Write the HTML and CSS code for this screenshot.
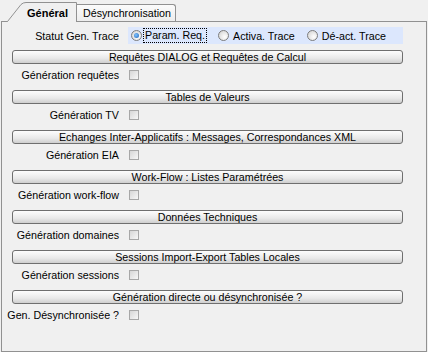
FILE: index.html
```html
<!DOCTYPE html>
<html lang="fr">
<head>
  <meta charset="UTF-8" />
  <title>Général</title>
  <link rel="stylesheet" href="styles.css">
</head>
<body>
<div class="window">
  <!-- Tabs -->
  <div class="tabs">
    <div class="tab tab-active">
      <svg class="tab-shape" width="70" height="21" viewBox="0 0 70 21">
        <path d="M0 21 L0.5 20.5 L14 3.5 Q16 1.5 19 1.5 L69.5 1.5 L69.5 21" fill="#f0f0f0" stroke="#919191" stroke-width="1"/>
      </svg>
      <span class="tab-text">Général</span>
    </div>
    <div class="tab tab-other">Désynchronisation</div>
  </div>
  <!-- Panel -->
  <div class="panel">
    <div class="row row-status">
      <span class="label">Statut Gen. Trace</span>
      <div class="radio-group">
        <label class="radio radio-checked"><span class="circle"></span><span class="focus">Param. Req.</span></label>
        <label class="radio"><span class="circle"></span><span>Activa. Trace</span></label>
        <label class="radio"><span class="circle"></span><span>Dé-act. Trace</span></label>
      </div>
    </div>

    <div class="section">
      <div class="bar">Requêtes DIALOG et Requêtes de Calcul</div>
      <div class="row"><span class="label">Génération requêtes</span><span class="check"></span></div>
    </div>
    <div class="section">
      <div class="bar">Tables de Valeurs</div>
      <div class="row"><span class="label">Génération TV</span><span class="check"></span></div>
    </div>
    <div class="section">
      <div class="bar">Echanges Inter-Applicatifs : Messages, Correspondances XML</div>
      <div class="row"><span class="label">Génération EIA</span><span class="check"></span></div>
    </div>
    <div class="section">
      <div class="bar">Work-Flow : Listes Paramétrées</div>
      <div class="row"><span class="label">Génération work-flow</span><span class="check"></span></div>
    </div>
    <div class="section">
      <div class="bar">Données Techniques</div>
      <div class="row"><span class="label">Génération domaines</span><span class="check"></span></div>
    </div>
    <div class="section">
      <div class="bar">Sessions Import-Export Tables Locales</div>
      <div class="row"><span class="label">Génération sessions</span><span class="check"></span></div>
    </div>
    <div class="section">
      <div class="bar">Génération directe ou désynchronisée ?</div>
      <div class="row"><span class="label">Gen. Désynchronisée ?</span><span class="check"></span></div>
    </div>
  </div>
</div>
</body>
</html>
```

FILE: styles.css
```css
body {
  margin: 0;
  background: #f0f0f0;
  font-family: 'Liberation Sans', Arial, sans-serif;
  font-size: 10.7px;
  color: #000;
}
.window {
  width: 428px;
  height: 352px;
  overflow: hidden;
}
.tabs {
  display: flex;
  align-items: flex-end;
  height: 21px;
  padding-left: 7px;
}
.tab {
  box-sizing: border-box;
  line-height: 14px;
}
.tab-active {
  position: relative;
  width: 70px;
  height: 21px;
  margin-bottom: -1px;
  z-index: 2;
}
.tab-shape {
  position: absolute;
  left: 0;
  top: 0;
}
.tab-text {
  position: relative;
  display: block;
  padding: 5px 0 0 20px;
  font-weight: bold;
  font-size: 11px;
}
.tab-other {
  width: 100px;
  height: 17px;
  padding: 1px 0 0 6px;
  margin-left: -1px;
  border: 1px solid #919191;
  border-bottom: none;
  border-radius: 0 3px 0 0;
  background: linear-gradient(#fbfbfb, #ededed);
}
.panel {
  box-sizing: border-box;
  position: relative;
  z-index: 1;
  width: 426px;
  height: 331px;
  margin-left: 1px;
  padding-top: 5px;
  border: 1px solid #919191;
  background: #f0f0f0;
}
.row {
  display: flex;
  align-items: center;
  height: 22px;
}
.label {
  width: 117px;
  text-align: right;
  white-space: nowrap;
}
.row-status {
  height: 17px;
}
.radio-group {
  display: flex;
  align-items: center;
  gap: 12px;
  height: 17px;
  width: 275px;
  margin-left: 9px;
  padding-left: 3px;
  box-sizing: border-box;
  background: #dce7fd;
}
.radio {
  display: flex;
  align-items: center;
  gap: 4px;
}
.circle {
  position: relative;
  width: 11px;
  height: 11px;
  box-sizing: border-box;
  border: 1px solid #7d7d7d;
  border-radius: 50%;
  background: radial-gradient(circle at 65% 65%, #ffffff, #cfcfcf);
}
.radio-checked .circle::after {
  content: '';
  position: absolute;
  left: 2px;
  top: 2px;
  width: 5px;
  height: 5px;
  border-radius: 50%;
  background: radial-gradient(circle at 40% 40%, #7fc3ff, #1f62b8);
}
.focus {
  outline: 1px dotted #000;
  padding: 0 1px;
  margin-left: -2px;
  line-height: 13px;
}
.section {
  margin-top: 4px;
}
.row-status + .section {
  margin-top: 6px;
}
.bar {
  box-sizing: border-box;
  width: 391px;
  height: 14px;
  margin-left: 10px;
  border: 1px solid #6f6f6f;
  border-radius: 3px;
  background: linear-gradient(#fdfdfd, #e9e9e9 60%, #cfcfcf);
  text-align: center;
  line-height: 12px;
  white-space: nowrap;
}
.check {
  width: 10px;
  height: 10px;
  box-sizing: border-box;
  margin-left: 10px;
  border: 1px solid #a7a7a7;
  background: linear-gradient(135deg, #d6d6d6, #f7f7f7);
}
```
